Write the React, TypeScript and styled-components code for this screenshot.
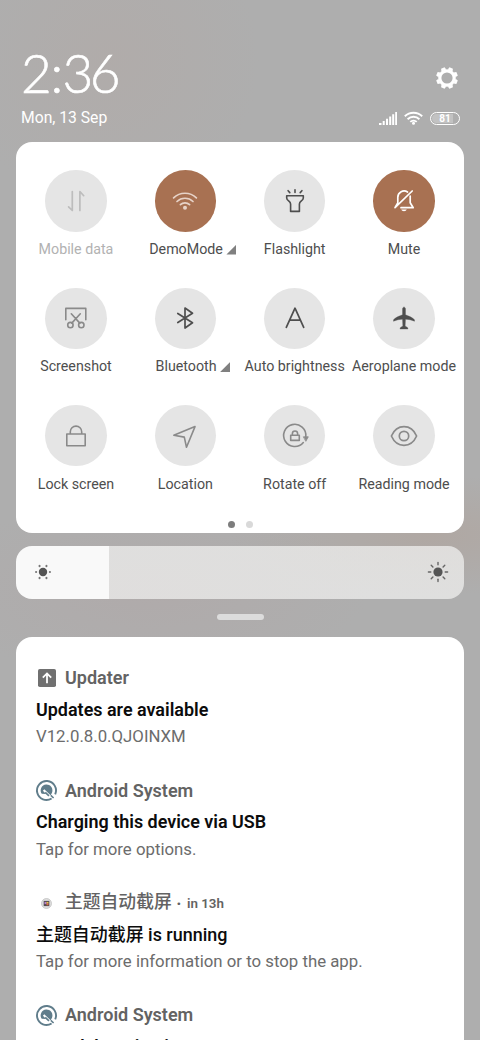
import React from 'react';
import styled, { createGlobalStyle } from 'styled-components';

const Global = createGlobalStyle`
  * { box-sizing: border-box; }
  html, body { margin: 0; padding: 0; }
  body { font-family: Roboto, "Noto Sans CJK SC", sans-serif; overflow: hidden; }
  svg { display: block; flex: none; overflow: visible; }
`;

const Shade = styled.main`
  width: 480px;
  height: 1040px;
  overflow: hidden;
  padding: 0 16px;
  display: flex;
  flex-direction: column;
  background:
    radial-gradient(circle at 110px 60px, rgba(178, 170, 167, 0.6), rgba(178, 170, 167, 0) 150px),
    radial-gradient(ellipse 200px 60px at 430px 535px, rgba(176, 166, 160, 0.8), rgba(176, 166, 160, 0)),
    radial-gradient(ellipse 220px 90px at 150px 590px, rgba(176, 170, 170, 0.9), rgba(176, 170, 170, 0)),
    #aeaeae;
`;

const Header = styled.header`
  height: 142px;
  flex: none;
  padding: 46px 4px 0 5px;
  color: #fff;
`;

const HeaderRow = styled.div<{ $height: number }>`
  height: ${(p) => p.$height}px;
  display: flex;
  align-items: center;
  justify-content: space-between;
`;

const Clock = styled.time`
  display: flex;
  margin-top: -8px;
  font: 300 53px/58px Lato, sans-serif;
  letter-spacing: -3.3px;
  -webkit-text-stroke: 0.6px #fff;
`;

const Colon = styled.span`
  margin: 0 2.5px 0 2px;
`;

const DateText = styled.span`
  font-size: 15.7px;
  line-height: 20px;
`;

const Status = styled.div`
  display: flex;
  align-items: center;
  gap: 7px;
`;

const Battery = styled.span`
  width: 30px;
  height: 13px;
  border: 1.3px solid #fff;
  border-radius: 7px;
  padding: 1px;
  display: flex;
`;

const BatteryLevel = styled.span`
  flex: 1;
  border-radius: 5px;
  background: linear-gradient(90deg, rgba(255, 255, 255, 0.25) 80%, transparent 80%);
  font: 700 10px/9.5px Roboto, sans-serif;
  text-align: center;
`;

const Panel = styled.section`
  height: 391px;
  flex: none;
  background: #fff;
  border-radius: 16px;
  padding: 28.3px 5.3px 0;
`;

const TileGrid = styled.div`
  display: grid;
  grid-template-columns: repeat(4, 1fr);
  grid-auto-rows: 117.3px;
`;

const Tile = styled.div`
  display: flex;
  flex-direction: column;
  align-items: center;
  min-width: 0;
`;

const Disc = styled.span<{ $active?: boolean }>`
  width: 61.5px;
  height: 61.5px;
  border-radius: 50%;
  background: ${(p) => (p.$active ? '#a87152' : '#e5e5e5')};
  display: flex;
  align-items: center;
  justify-content: center;
`;

const TileLabel = styled.span<{ $muted?: boolean }>`
  margin-top: 7.3px;
  display: flex;
  align-items: center;
  white-space: nowrap;
  font-size: 14.25px;
  line-height: 20px;
  color: ${(p) => (p.$muted ? '#b2b2b2' : '#4e4e4e')};
`;

const Corner = styled.i`
  width: 10px;
  height: 10px;
  margin: 1px -15px 0 3.5px;
  background: #808080;
  clip-path: polygon(100% 0, 100% 100%, 0 100%);
`;

const Pager = styled.div`
  display: flex;
  justify-content: center;
  gap: 11px;
  margin-top: -1px;
`;

const Dot = styled.span<{ $on?: boolean }>`
  width: 7px;
  height: 7px;
  border-radius: 50%;
  background: ${(p) => (p.$on ? '#7d7d7d' : '#d9d9d9')};
`;

const Brightness = styled.div`
  height: 53.5px;
  flex: none;
  margin-top: 12.5px;
  border-radius: 16px;
  padding: 0 15.5px 0 18px;
  display: flex;
  align-items: center;
  justify-content: space-between;
  background: linear-gradient(90deg, #f9f9f9 93.3px, rgba(240, 240, 239, 0.74) 93.3px);
`;

const Handle = styled.div`
  width: 47px;
  height: 6px;
  flex: none;
  margin: 15px auto 17.3px;
  border-radius: 3px;
  background: #dcdcdc;
`;

const Notifications = styled.section`
  flex: none;
  height: 440px;
  background: #fff;
  border-radius: 16px;
  padding: 28px 20px 0;
`;

const Notice = styled.article`
  height: 112.4px;
`;

const NoticeHead = styled.div`
  display: flex;
  align-items: center;
  height: 26px;
  color: #636363;
  font-size: 18px;
  font-weight: 600;
  white-space: pre;
`;

const IconSlot = styled.span`
  width: 21px;
  height: 21px;
  margin-right: 8px;
  display: flex;
  align-items: center;
  justify-content: center;
`;

const AppName = styled.span<{ $cjk?: boolean }>`
  line-height: 26px;
  font-size: ${(p) => (p.$cjk ? 17.8 : 18)}px;
  margin-top: ${(p) => (p.$cjk ? -2 : 0)}px;
  font-weight: ${(p) => (p.$cjk ? 500 : 600)};
`;

const When = styled.span`
  font-size: 13.4px;
  margin-left: 1px;
`;

const NoticeTitle = styled.h2<{ $cjk?: boolean }>`
  margin: 5.5px 0 0;
  font-size: 17.95px;
  line-height: 26px;
  font-weight: ${(p) => (p.$cjk ? 500 : 600)};
  color: #0c0c0c;
  white-space: nowrap;
`;

const NoticeText = styled.p`
  margin: 0.5px 0 0;
  font-size: 16.8px;
  line-height: 26px;
  color: #6c6c6c;
  white-space: nowrap;
`;

type SvgProps = { size?: number; color?: string; sw?: number; children: React.ReactNode };

const Svg = ({ size = 28, color = '#4e4e4e', sw = 1.6, children }: SvgProps) => (
  <svg width={size} height={size} viewBox={`0 0 ${size} ${size}`} fill="none" stroke={color} strokeWidth={sw} strokeLinecap="round" strokeLinejoin="round">
    {children}
  </svg>
);

const GREY = '#8a8a8a';

const DataIcon = () => (
  <Svg color="#bdbdbd" sw={1.7}>
    <path d="M10.3 4.500v19L6.600 19.800M17.900 23.500v-19l3.800 4.200" />
  </Svg>
);

const WifiTileIcon = () => (
  <Svg color="#e7d3c8" sw={1.7}>
    <path d="M2.600 10.800a16.500 16.500 0 0 1 22.800 0M6 14.500a11.500 11.500 0 0 1 16 0M9.400 17.700a6.600 6.600 0 0 1 9.200 0" />
    <circle cx="14" cy="20.800" r="2" fill="#e7d3c8" stroke="none" />
  </Svg>
);

const TorchIcon = () => (
  <Svg sw={1.600}>
    <path d="M5.700 8.700h16.600v2.200c0 2.900-3.900 3.200-3.900 6.100v7.400H9.600V17c0-2.900-3.900-3.200-3.900-6.100zM14 5.400V2.700M8.800 5.600 7.100 3.700M19.200 5.600l1.700-1.900" />
  </Svg>
);

const MuteIcon = () => (
  <Svg color="#fff" sw={1.700}>
    <path d="M7.800 15.500V10.200a6.300 6.300 0 0 1 9.700-5.200M20.200 9v6.700l3 5H11M22.200 4 5 20.700l2.600-4.600" />
    <path d="M11.200 22.600h5.600a2.900 2.300 0 0 1-5.600 0z" fill="#fff" stroke="none" />
  </Svg>
);

const ScreenshotIcon = () => (
  <Svg color={GREY}>
    <path d="M3.800 15.800V4.400h20v11.400M9.300 9.800l8.500 9.300M18.300 9.800l-8.500 9.300" />
    <circle cx="8.400" cy="21.100" r="2.700" />
    <circle cx="19.300" cy="21.100" r="2.700" />
  </Svg>
);

const BluetoothIcon = () => (
  <Svg sw={1.700}>
    <path d="M6.800 9.500 21.500 18.700 14 24V4l7.500 5.300L6.800 18.500" />
  </Svg>
);

const AutoIcon = () => (
  <Svg sw={1.700}>
    <path d="M5.300 23.300 14 4.200l8.700 19.100M8.600 16.200h10.800" />
  </Svg>
);

const PlaneIcon = () => (
  <Svg sw={0.300}>
    <path d="M14 3.200c.9 0 1.500.8 1.500 1.800v5.800c3 .9 7.400 3 9 5v1.500c-3-1.300-6-2-9-2.100l-.3 6.500c.3 1 2.700 1.200 2.700 2.600v.8h-7.800v-.8c0-1.400 2.400-1.600 2.700-2.600l-.3-6.500c-3 .1-6 .8-9 2.100v-1.500c1.600-2 6-4.100 9-5V5c0-1 .6-1.800 1.500-1.800z" fill="#4e4e4e" />
  </Svg>
);

const LockIcon = () => (
  <Svg color={GREY}>
    <path d="M4.800 12h18.400v11.800H4.800zM8.300 12V9.800a5.700 5.700 0 0 1 11.400 0V12" />
  </Svg>
);

const LocationIcon = () => (
  <Svg color={GREY}>
    <path d="M24 4.600 2.800 13.200l10.500 1.900 2.200 10.200z" />
  </Svg>
);

const RotateIcon = () => (
  <Svg color={GREY}>
    <path d="M22.300 20.500A11.100 11.100 0 1 1 24.800 14.500" />
    <path d="M22.700 14.800h4.600l-2.300 4.200z" fill={GREY} stroke={GREY} strokeWidth="0.800" />
    <path d="M9.700 13.300h8.600v5.100H9.700zM11.400 13.300v-1.700a2.600 2.600 0 0 1 5.200 0v1.700" />
  </Svg>
);

const EyeIcon = () => (
  <Svg color={GREY} sw={1.700}>
    <path d="M1.400 14C3.800 8.500 8.300 4.700 14 4.700S24.200 8.500 26.600 14C24.200 19.500 19.700 23.300 14 23.300S3.800 19.500 1.400 14z" />
    <circle cx="14" cy="14" r="4.700" />
  </Svg>
);

const GEAR_TEETH = [22.5, 67.5, 112.5, 157.5, 202.5, 247.5, 292.5, 337.5];

const Gear = styled.svg`
  margin: 2px 2.5px 0 0;
`;

const GearIcon = () => (
  <Gear width="22" height="22" viewBox="-11 -11 22 22">
    <circle r="7.200" fill="none" stroke="#fff" strokeWidth="3.200" />
    {GEAR_TEETH.map((a) => (
      <path key={a} d="M-2.600-8.200-1.900-10.900H1.900L2.600-8.200z" fill="#fff" transform={`rotate(${a})`} />
    ))}
  </Gear>
);

const SignalIcon = () => (
  <svg width="18" height="13" viewBox="0 0 18 13" fill="#fff">
    <path d="M0 11h2.500v2H0zM3.700 9h2v4h-2zM7 6.700h2V13H7zM10.200 4.500h2V13h-2zM13.200 2.300h2V13h-2zM16.200 0h1.800v13h-1.800z" />
  </svg>
);

const WifiIcon = () => (
  <svg width="19" height="14" viewBox="0 0 19 14" fill="none" stroke="#fff" strokeWidth="1.900">
    <path d="M.8 5.200a12.500 12.500 0 0 1 17.400 0M3.600 8.200a8.500 8.500 0 0 1 11.800 0M6.300 10.900a4.700 4.700 0 0 1 6.400 0" />
    <circle cx="9.500" cy="12.200" r="1.500" fill="#fff" stroke="none" />
  </svg>
);

const DimSun = () => (
  <svg width="18" height="18" viewBox="-9 -9 18 18" fill="#555">
    <circle r="4.200" />
    {[0, 60, 120, 180, 240, 300].map((a) => (
      <circle key={a} cx="6.900" r="1.100" fill="#777" transform={`rotate(${a})`} />
    ))}
  </svg>
);

const BrightSun = () => (
  <svg width="22" height="22" viewBox="-11 -11 22 22" fill="#555">
    <circle r="4.600" />
    {[0, 45, 90, 135, 180, 225, 270, 315].map((a) => (
      <path key={a} d="M7.200 0h2.400" stroke="#666" strokeWidth="1.400" strokeLinecap="round" transform={`rotate(${a})`} />
    ))}
  </svg>
);

const UpdaterIcon = () => (
  <svg width="18" height="18" viewBox="0 0 18 18">
    <rect width="18" height="18" rx="1.800" fill="#707070" />
    <path d="M9 14.300V4.800M4.800 8.600 9 4.400l4.200 4.200" fill="none" stroke="#fff" strokeWidth="1.800" />
  </svg>
);

const AndroidIcon = () => (
  <svg width="21" height="21" viewBox="0 0 21 21" fill="none" stroke="#607d8b">
    <path d="M15.600 18.500A9.500 9.500 0 1 1 19.200 14.300" strokeWidth="1.900" />
    <path d="M5.700 13.800A5.900 5.900 0 1 1 15.900 12.900L14.600 15.200 8.300 9.300 6.900 10.700 10 13.900z" fill="#607d8b" stroke="none" />
    <path d="M9.200 12.300 13 15.800" strokeWidth="1.700" />
    <path d="M14.800 15.400 17.600 18" strokeWidth="1.500" />
  </svg>
);

const ThemeIcon = () => (
  <svg width="11" height="11" viewBox="0 0 11 11">
    <circle cx="5.500" cy="5.500" r="5" fill="#ddd" stroke="#bbb" strokeWidth="0.700" />
    <rect x="2.700" y="2.900" width="5.600" height="5.200" fill="#514a50" />
    <path d="M3.500 3.900h2v2.200h-2z" fill="#b77fd0" />
    <path d="M5.500 3.900h2v1.700h-2z" fill="#e6c64b" />
    <path d="M5.500 5.600h2v1.700h-2z" fill="#e06745" />
  </svg>
);

const tiles = [
  { label: 'Mobile data', icon: <DataIcon />, muted: true },
  { label: 'DemoMode', icon: <WifiTileIcon />, active: true, more: true },
  { label: 'Flashlight', icon: <TorchIcon /> },
  { label: 'Mute', icon: <MuteIcon />, active: true },
  { label: 'Screenshot', icon: <ScreenshotIcon /> },
  { label: 'Bluetooth', icon: <BluetoothIcon />, more: true },
  { label: 'Auto brightness', icon: <AutoIcon /> },
  { label: 'Aeroplane mode', icon: <PlaneIcon /> },
  { label: 'Lock screen', icon: <LockIcon /> },
  { label: 'Location', icon: <LocationIcon /> },
  { label: 'Rotate off', icon: <RotateIcon /> },
  { label: 'Reading mode', icon: <EyeIcon /> },
];

const notices = [
  { app: 'Updater', icon: <UpdaterIcon />, title: 'Updates are available', text: 'V12.0.8.0.QJOINXM' },
  { app: 'Android System', icon: <AndroidIcon />, title: 'Charging this device via USB', text: 'Tap for more options.' },
  { app: '主题自动截屏', icon: <ThemeIcon />, cjk: true, when: 'in 13h', title: '主题自动截屏 is running', text: 'Tap for more information or to stop the app.' },
  { app: 'Android System', icon: <AndroidIcon />, title: 'USB debugging is on', text: '' },
];

export default function App() {
  return (
    <Shade>
      <Global />
      <Header>
        <HeaderRow $height={62}>
          <Clock>
            2<Colon>:</Colon>36
          </Clock>
          <GearIcon />
        </HeaderRow>
        <HeaderRow $height={20}>
          <DateText>Mon, 13 Sep</DateText>
          <Status>
            <SignalIcon />
            <WifiIcon />
            <Battery>
              <BatteryLevel>81</BatteryLevel>
            </Battery>
          </Status>
        </HeaderRow>
      </Header>
      <Panel>
        <TileGrid>
          {tiles.map((t) => (
            <Tile key={t.label}>
              <Disc $active={t.active}>{t.icon}</Disc>
              <TileLabel $muted={t.muted}>
                {t.label}
                {t.more && <Corner />}
              </TileLabel>
            </Tile>
          ))}
        </TileGrid>
        <Pager>
          <Dot $on />
          <Dot />
        </Pager>
      </Panel>
      <Brightness>
        <DimSun />
        <BrightSun />
      </Brightness>
      <Handle />
      <Notifications>
        {notices.map((n, i) => (
          <Notice key={i}>
            <NoticeHead>
              <IconSlot>{n.icon}</IconSlot>
              <AppName $cjk={n.cjk}>{n.app}</AppName>
              {n.when && (
                <>
                  {' · '}
                  <When>{n.when}</When>
                </>
              )}
            </NoticeHead>
            <NoticeTitle $cjk={n.cjk}>{n.title}</NoticeTitle>
            <NoticeText>{n.text}</NoticeText>
          </Notice>
        ))}
      </Notifications>
    </Shade>
  );
}
